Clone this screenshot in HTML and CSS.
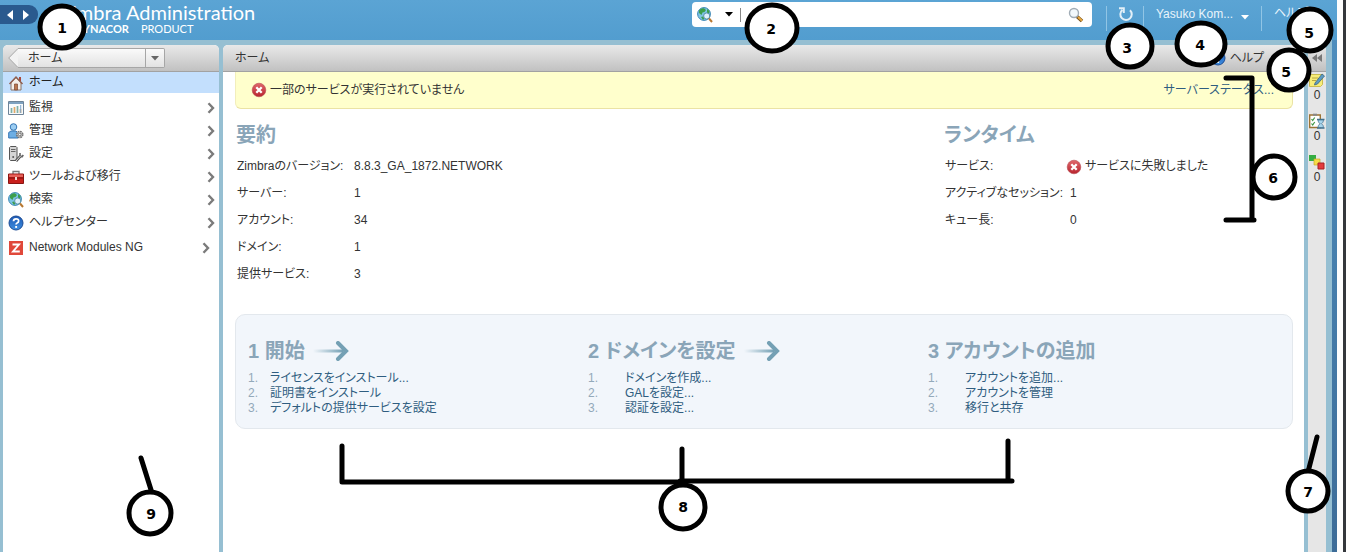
FILE: index.html
```html
<!DOCTYPE html>
<html lang="ja">
<head>
<meta charset="utf-8">
<title>Zimbra Administration</title>
<link rel="stylesheet" href="styles.css">
</head>
<body>
<svg class="defs" aria-hidden="true">
  <defs>
    <linearGradient id="fade"><stop offset="0" stop-color="#74a0b4" stop-opacity="0"/><stop offset="1" stop-color="#74a0b4"/></linearGradient>
    <linearGradient id="red" x2="0" y2="1"><stop offset="0" stop-color="#e0686c"/><stop offset="1" stop-color="#b8242e"/></linearGradient>
    <linearGradient id="blue" x2="0" y2="1"><stop offset="0" stop-color="#1c58b4"/><stop offset="1" stop-color="#3f8fe0"/></linearGradient>
  </defs>
  <symbol id="i-error" viewBox="0 0 16 16"><circle cx="8" cy="8" r="6.8" fill="url(#red)" stroke="#b5474d" stroke-width=".6"/><path d="M5.3 5.3l5.4 5.4M10.7 5.3l-5.4 5.4" stroke="#fff" stroke-width="2.3"/></symbol>
  <symbol id="i-home" viewBox="0 0 16 16"><path d="M11 2h2v4h-2z" fill="#a8483c"/><path d="M3 7.500l5-5 5 5V15H3z" fill="#f4f0ea" stroke="#8a7468"/><path d="M1.500 9L8 2l6.500 7" fill="none" stroke="#8f5f50" stroke-width="1.500"/><path d="M6.500 9h3v6h-3z" fill="#b97850" stroke="#7c4630" stroke-width=".7"/></symbol>
  <symbol id="i-chart" viewBox="0 0 16 16"><path d="M.5 1.500h15v13H.5z" fill="#f7fafc" stroke="#6e8498"/><path d="M1 2h14v2H1z" fill="#7ea2c0"/><path d="M3.500 13V8M9.500 13V6" stroke="#7fb0a6" stroke-width="1.700"/><path d="M6.500 13V7M12.500 13V9" stroke="#e0a868" stroke-width="1.700"/><path d="M12.700 13V5" stroke="#80a8d0"/></symbol>
  <symbol id="i-user" viewBox="0 0 16 16"><path d="M.7 15V9.500L3 8h5l2 2v5z" fill="#6daee4" stroke="#3776b4"/><circle cx="5.500" cy="4" r="3.300" fill="#9bcdf2" stroke="#3776b4"/><circle cx="11.700" cy="11.500" r="3" fill="#ddd" stroke="#777" stroke-width="1.700" stroke-dasharray="1.700 .65"/><circle cx="11.700" cy="11.500" r="1.300" fill="#fff" stroke="#555" stroke-width=".8"/></symbol>
  <symbol id="i-server" viewBox="0 0 16 16"><path d="M1.500 1.500l1-1H8l1 1v12l-1 1H2.500l-1-1z" fill="#d5d5d5" stroke="#555"/><path d="M3 3.500h4.500M3 5.500h4.500" stroke="#666"/><circle cx="5.200" cy="11" r="1" fill="#555"/><path d="M8 15l4.500-5" stroke="#555" stroke-width="2.800"/><path d="M12 7v3l2 .8L15.300 9" fill="none" stroke="#666" stroke-width="1.600"/><path d="M8 15l4.500-5" stroke="#ddd"/></symbol>
  <symbol id="i-tools" viewBox="0 0 16 16"><path d="M5 5V2.500h6V5" fill="none" stroke="#777" stroke-width="1.300"/><path d="M.5 5h15v9.500H.5z" fill="#c8201c" stroke="#8a1512"/><path d="M1 5.500h14v2.500H1z" fill="#e8625a"/><path d="M1 9h14" stroke="#7e100e"/><path d="M7 8h2v3H7z" fill="#f3d9d0"/></symbol>
  <symbol id="i-globe" viewBox="0 0 16 16"><circle cx="7" cy="7" r="6.400" fill="#7cc4e4" stroke="#3b86b4"/><path d="M2 3.500Q4.500.5 7 1.300L9 3 7.500 5 5.500 5.500 4.500 8 2 6zM10 2l2.500 2L12 7l-2-1.500zM4 10l2-.5 1.500 2L6 13z" fill="#3c9e4c"/><circle cx="9.700" cy="9" r="3.100" fill="#eef8ff" fill-opacity=".85" stroke="#5690aa"/><path d="M12 11.500l3 3.500" stroke="#b87830" stroke-width="2"/></symbol>
  <symbol id="i-help" viewBox="0 0 16 16"><circle cx="8" cy="8" r="7" fill="url(#blue)" stroke="#1c4c94"/><path d="M5.500 6.300q0-2.500 2.600-2.500t2.500 2.200q0 1.300-1.500 2-1 .5-1 1.600" fill="none" stroke="#fff" stroke-width="1.800"/><path d="M7.200 11h1.900v1.900H7.200z" fill="#fff"/></symbol>
  <symbol id="i-z" viewBox="0 0 16 16"><path d="M1 1h14v14H1z" fill="#e0483a"/><path d="M4.500 4.500h6.500l-6 7h6.800" fill="none" stroke="#fff" stroke-width="1.900"/></symbol>
  <symbol id="i-search" viewBox="0 0 16 16"><path d="M9 9.500l5 4.500" stroke="#74501c" stroke-width="3.600"/><path d="M10 10l4 3.700" stroke="#e8a840" stroke-width="2"/><circle cx="6" cy="6" r="4.500" fill="#f2f8fb" stroke="#a0acb6" stroke-width="1.400"/></symbol>
  <symbol id="i-chevron" viewBox="0 0 8 12"><path d="M1.500 1.200L6 6l-4.500 4.800" fill="none" stroke="#7b7b7b" stroke-width="2.400"/></symbol>
  <symbol id="i-arrow" viewBox="0 0 36 20"><path d="M0 8.500h30v3H0z" fill="url(#fade)"/><path d="M25 2l8 8-8 8" fill="none" stroke="#74a0b4" stroke-width="4" stroke-linecap="round"/></symbol>
  <symbol id="i-note" viewBox="0 0 16 16"><path d="M.5 2.500h13v10l-2 2H.5z" fill="#f7ed78" stroke="#cbbd50"/><path d="M3 6h6M3 8.500h4" stroke="#b8a840"/><path d="M6 11l7-9 2.500 2-7 8-3 1z" fill="#5c9cc4" stroke="#3d6480" stroke-width=".8"/></symbol>
  <symbol id="i-task" viewBox="0 0 16 16"><path d="M.7 2h10.600v12.500H.7z" fill="#fff" stroke="#9c7434" stroke-width="1.400"/><path d="M4 .7h4v2H4z" fill="#888"/><path d="M2.500 6l1.200 1.500 2-3M2.500 10.500L3.700 12l2-3" fill="none" stroke="#3f9644" stroke-width="1.200"/><path d="M8 6.500h7.500M8 15h7.500" stroke="#41708e" stroke-width="1.500"/><path d="M9 7h5.500q0 2.500-2 3.700 2 1.300 2 3.800H9q0-2.500 2-3.800Q9 9.500 9 7z" fill="#a9d5ec" stroke="#41708e" stroke-width=".7"/></symbol>
  <symbol id="i-blocks" viewBox="0 0 16 16"><path d="M0 1h7v6H0z" fill="#35ad42"/><path d="M5 5h6v6H5z" fill="#f5dc48" stroke="#c6a62c" stroke-width=".7"/><path d="M9 9h6v6H9z" fill="#e43b3d" stroke="#a82024"/></symbol>
</svg>

<div class="window">
  <div class="app">
    <header class="top">
      <div class="history">
        <button type="button" aria-label="戻る"><svg viewBox="0 0 8 10"><path d="M7 0v10L1 5z"/></svg></button>
        <button type="button" aria-label="進む"><svg viewBox="0 0 8 10"><path d="M1 0v10l6-5z"/></svg></button>
      </div>
      <div class="brand">
        <span class="brand-name">Zimbra Administration</span>
        <span class="brand-sub"><b>SYNACOR</b><span>PRODUCT</span></span>
      </div>
      <form class="search">
        <button type="button" class="scope" aria-label="検索対象"><svg class="icon"><use href="#i-globe"/></svg><svg class="caret" viewBox="0 0 8 5"><path d="M0 0h8L4 4.500z"/></svg></button>
        <input type="text" aria-label="検索">
        <button type="button" aria-label="検索を実行"><svg class="icon"><use href="#i-search"/></svg></button>
      </form>
      <div class="tools">
        <button type="button" class="refresh" aria-label="更新"><svg viewBox="0 0 16 16"><path d="M4.300 4A5.700 5.700 0 1 0 12 4.200M1 2.200h4.800V7" fill="none" stroke="#e3f0f8" stroke-width="2"/></svg></button>
        <button type="button" class="user">Yasuko Kom...<svg class="caret" viewBox="0 0 8 5"><path d="M0 0h8L4 4.500z"/></svg></button>
        <a href="#" class="top-help">ヘルプ</a>
      </div>
    </header>

    <div class="panes">
      <nav class="side">
        <div class="bar">
          <div class="crumb">
            <svg class="crumb-tip" viewBox="0 0 10 20" preserveAspectRatio="none"><path d="M10 .5L.7 10l9.300 9.500" fill="#f3f3f3" stroke="#a6a6a6"/></svg>
            <button type="button" class="crumb-text">ホーム</button>
            <button type="button" class="crumb-drop" aria-label="履歴"><svg class="caret" viewBox="0 0 8 5"><path d="M0 0h8L4 4.500z"/></svg></button>
          </div>
        </div>
        <a href="#" class="item current"><svg class="icon"><use href="#i-home"/></svg><span>ホーム</span></a>
        <div class="items">
          <a href="#" class="item"><svg class="icon"><use href="#i-chart"/></svg><span>監視</span><svg class="chev"><use href="#i-chevron"/></svg></a>
          <a href="#" class="item"><svg class="icon"><use href="#i-user"/></svg><span>管理</span><svg class="chev"><use href="#i-chevron"/></svg></a>
          <a href="#" class="item"><svg class="icon"><use href="#i-server"/></svg><span>設定</span><svg class="chev"><use href="#i-chevron"/></svg></a>
          <a href="#" class="item"><svg class="icon"><use href="#i-tools"/></svg><span>ツールおよび移行</span><svg class="chev"><use href="#i-chevron"/></svg></a>
          <a href="#" class="item"><svg class="icon"><use href="#i-globe"/></svg><span>検索</span><svg class="chev"><use href="#i-chevron"/></svg></a>
          <a href="#" class="item"><svg class="icon"><use href="#i-help"/></svg><span>ヘルプセンター</span><svg class="chev"><use href="#i-chevron"/></svg></a>
          <a href="#" class="item module"><svg class="icon"><use href="#i-z"/></svg><span>Network Modules NG</span><svg class="chev"><use href="#i-chevron"/></svg></a>
        </div>
      </nav>

      <main class="main">
        <div class="bar main-bar">
          <span>ホーム</span>
          <a href="#" class="help"><svg class="icon"><use href="#i-help"/></svg>ヘルプ</a>
        </div>
        <div class="content">
          <div class="alert"><svg class="icon"><use href="#i-error"/></svg><span>一部のサービスが実行されていません</span><a href="#">サーバーステータス...</a></div>
          <div class="status">
            <section class="summary">
              <h2>要約</h2>
              <table>
                <tr><th scope="row">Zimbraのバージョン:</th><td>8.8.3_GA_1872.NETWORK</td></tr>
                <tr><th scope="row">サーバー:</th><td>1</td></tr>
                <tr><th scope="row">アカウント:</th><td>34</td></tr>
                <tr><th scope="row">ドメイン:</th><td>1</td></tr>
                <tr><th scope="row">提供サービス:</th><td>3</td></tr>
              </table>
            </section>
            <section class="runtime">
              <h2>ランタイム</h2>
              <table>
                <tr><th scope="row">サービス:</th><td><span class="fail"><svg class="icon"><use href="#i-error"/></svg>サービスに失敗しました</span></td></tr>
                <tr><th scope="row">アクティブなセッション:</th><td>1</td></tr>
                <tr><th scope="row">キュー長:</th><td>0</td></tr>
              </table>
            </section>
          </div>
          <div class="steps">
            <section>
              <h2>1 開始 <svg class="arrow"><use href="#i-arrow"/></svg></h2>
              <ol>
                <li><a href="#">ライセンスをインストール...</a></li>
                <li><a href="#">証明書をインストール</a></li>
                <li><a href="#">デフォルトの提供サービスを設定</a></li>
              </ol>
            </section>
            <section class="wide">
              <h2>2 ドメインを設定 <svg class="arrow"><use href="#i-arrow"/></svg></h2>
              <ol>
                <li><a href="#">ドメインを作成...</a></li>
                <li><a href="#">GALを設定...</a></li>
                <li><a href="#">認証を設定...</a></li>
              </ol>
            </section>
            <section class="wide">
              <h2>3 アカウントの追加</h2>
              <ol>
                <li><a href="#">アカウントを追加...</a></li>
                <li><a href="#">アカウントを管理</a></li>
                <li><a href="#">移行と共存</a></li>
              </ol>
            </section>
          </div>
        </div>
      </main>

      <aside class="strip">
        <button type="button" class="bar collapse" aria-label="折りたたむ"><svg viewBox="0 0 10 8"><path d="M5 0v8L0 4zM10 0v8L5 4z"/></svg></button>
        <div class="counter"><svg class="icon"><use href="#i-note"/></svg>0</div>
        <div class="counter"><svg class="icon"><use href="#i-task"/></svg>0</div>
        <div class="counter"><svg class="icon"><use href="#i-blocks"/></svg>0</div>
      </aside>
    </div>
  </div>
</div>

<svg class="notes" width="1346" height="552" viewBox="0 0 1346 552">
  <g class="lines">
    <path d="M1226 78h26v142M1226 220h28"/>
    <path d="M342 446v36h340M682 449v38M680 481h332M1008 441v40"/>
    <path d="M141 458l11 35M1317 437l-9 35"/>
  </g>
  <g class="rings">
    <ellipse cx="62" cy="27" rx="22" ry="21"/><ellipse cx="772" cy="28" rx="25" ry="23"/>
    <ellipse cx="1130" cy="46" rx="22" ry="21"/><ellipse cx="1201" cy="44" rx="24" ry="21"/>
    <circle cx="1310" cy="30" r="21"/><circle cx="1289" cy="70" r="20"/>
    <circle cx="1274" cy="177" r="21"/><circle cx="1308" cy="491" r="20"/>
    <circle cx="683" cy="507" r="22"/><circle cx="150" cy="513" r="21"/>
  </g>
  <g class="nums">
    <text x="62" y="33">1</text><text x="771" y="34">2</text><text x="1127" y="53">3</text><text x="1200" y="50">4</text>
    <text x="1309" y="38">5</text><text x="1286" y="77">5</text><text x="1273" y="183">6</text><text x="1308" y="497">7</text>
    <text x="683" y="512">8</text><text x="151" y="519">9</text>
  </g>
</svg>
</body>
</html>
```
FILE: styles.css
```css
* { box-sizing: border-box; }
body {
  margin: 0;
  position: relative;
  overflow: hidden;
  font: 12px/15px "Liberation Sans", "Noto Sans CJK JP", sans-serif;
  font-feature-settings: "palt";
  color: #333;
}
button, input { font: inherit; color: inherit; border: 0; padding: 0; background: none; font-feature-settings: inherit; }
a { color: inherit; text-decoration: none; }
svg { display: block; flex: none; }
.defs { position: absolute; width: 0; height: 0; }
.icon { width: 16px; height: 16px; }
.caret { width: 8px; height: 5px; }

.window { min-height: 100vh; display: flex; background: #fdfdfd; border-right: 3px solid #34373c; padding-right: 6px; }
.app { flex: 1; min-width: 0; display: flex; flex-direction: column; background: linear-gradient(#4f90c0, #3d6c98); }

.top { height: 40px; display: flex; align-items: flex-start; background: linear-gradient(#5ba4d4, #529dcf); color: #fff; }
.history { display: flex; gap: 8px; margin-top: 5px; padding: 5px 6px; width: 38px; height: 19px; background: #2a5a8e; border-radius: 0 9px 9px 0; }
.history svg { width: 8px; height: 10px; fill: #fff; }
.brand { display: flex; flex-direction: column; margin: 2px 0 0 22px; flex: 1; }
.brand-name { font: 20px/20px Lato, sans-serif; }
.brand-sub { display: flex; gap: 12px; font: 11px/14px Lato, sans-serif; padding-left: 17px; }
.search { width: 400px; height: 25px; margin-top: 2px; padding: 0 8px 0 5px; display: flex; align-items: center; gap: 7px; background: #fff; border-radius: 4px; color: #222; }
.search input { flex: 1; min-width: 0; height: 14px; border-left: 1px solid #888; outline: 0; }
.scope { display: flex; align-items: center; gap: 12px; }
.tools { display: flex; margin: 6px 0 0 14px; height: 25px; }
.tools > * { border-left: 1px solid #91c5e5; display: flex; color: #e9f4fb; }
.refresh { width: 37px; padding-left: 11px; }
.refresh svg { width: 16px; height: 16px; }
.user { width: 118px; padding-left: 12px; gap: 8px; line-height: 16px; }
.user .caret { margin-top: 9px; fill: #fff; }
.top-help { width: 76px; padding-left: 12px; }

.panes { flex: 1; display: flex; margin-right: 5px; padding: 5px 6px 0 3px; gap: 4px; background: #96bfd2; }
.bar { height: 27px; display: flex; align-items: center; background: linear-gradient(#e9e9e9, #c1c1c1); border-bottom: 1px solid #a2a2a2; border-radius: 5px 5px 0 0; }
.side { width: 216px; background: #fff; border-radius: 5px 5px 0 0; }
.crumb { width: 157px; height: 20px; margin-left: 5px; display: flex; }
.crumb-tip { width: 10px; height: 20px; }
.crumb-text, .crumb-drop { background: linear-gradient(#fafafa, #e2e2e2); border: 1px solid #a6a6a6; }
.crumb-text { flex: 1; border-left: 0; text-align: left; padding-left: 10px; }
.crumb-drop { width: 19px; border-left: 0; border-radius: 0 2px 2px 0; padding-left: 5px; }
.crumb-drop .caret { fill: #666; }
.item { display: flex; align-items: center; height: 23px; padding: 0 4px 0 5px; gap: 5px; }
.item span { flex: 1; }
.current { height: 21px; background: #c3dffd; color: #222; }
.items { padding-top: 3px; }
.chev { width: 8px; height: 12px; }
.module { height: 27px; padding-right: 9px; }

.main { flex: 1; min-width: 0; background: #fff; border-radius: 5px 5px 0 0; }
.main-bar { padding: 0 40px 0 12px; justify-content: space-between; }
.help { display: flex; align-items: center; gap: 4px; }
.content { padding: 0 11px 0 12px; }
.alert { height: 37px; display: flex; align-items: center; gap: 3px; padding: 0 18px 0 15px; background: #ffffcc; border: 1px solid #ebe3a4; border-top: 0; border-left-color: #f2eebc; border-radius: 0 0 6px 6px; }
.alert span { flex: 1; }
.alert a, .steps a { color: #2f5d80; }
h2 { margin: 0; font-size: 20px; line-height: 28px; color: #8aa5b8; display: flex; align-items: center; gap: 3px; white-space: pre; }
.status { display: flex; justify-content: space-between; padding: 12px 0 0 1px; }
.runtime { width: 349px; }
table { border-collapse: collapse; margin: 4px 0 0 1px; }
th { font-weight: normal; text-align: left; width: 117px; }
th, td { padding: 0; height: 27px; white-space: nowrap; }
.runtime th { width: 125px; }
.fail { display: flex; align-items: center; gap: 3px; margin-left: -4px; }
.steps { margin-top: 26px; padding: 22px 24px 12px 12px; display: grid; grid-template-columns: repeat(3, 1fr); background: #f2f6fb; border: 1px solid #e3e8ed; border-radius: 10px; }
.arrow { width: 36px; height: 20px; }
ol { list-style: none; margin: 6px 0 0; padding: 0; counter-reset: step; }
li { counter-increment: step; display: flex; color: #93a9ba; }
li::before { content: counter(step) "."; width: 22px; }
.wide li::before { width: 37px; }

.strip { width: 18px; background: #e6e6e6; border-radius: 5px 5px 0 0; display: flex; flex-direction: column; }
.collapse { width: 100%; justify-content: center; }
.collapse svg { width: 10px; height: 8px; fill: #777; }
.counter { height: 41px; display: flex; flex-direction: column; align-items: center; }

.notes { position: absolute; top: 0; left: 0; pointer-events: none; }
.lines { fill: none; stroke: #000; stroke-width: 5px; stroke-linecap: round; stroke-linejoin: round; }
.rings { fill: #fff; stroke: #000; stroke-width: 5px; }
.nums { font: bold 14px "DejaVu Sans", sans-serif; text-anchor: middle; fill: #000; }
```
